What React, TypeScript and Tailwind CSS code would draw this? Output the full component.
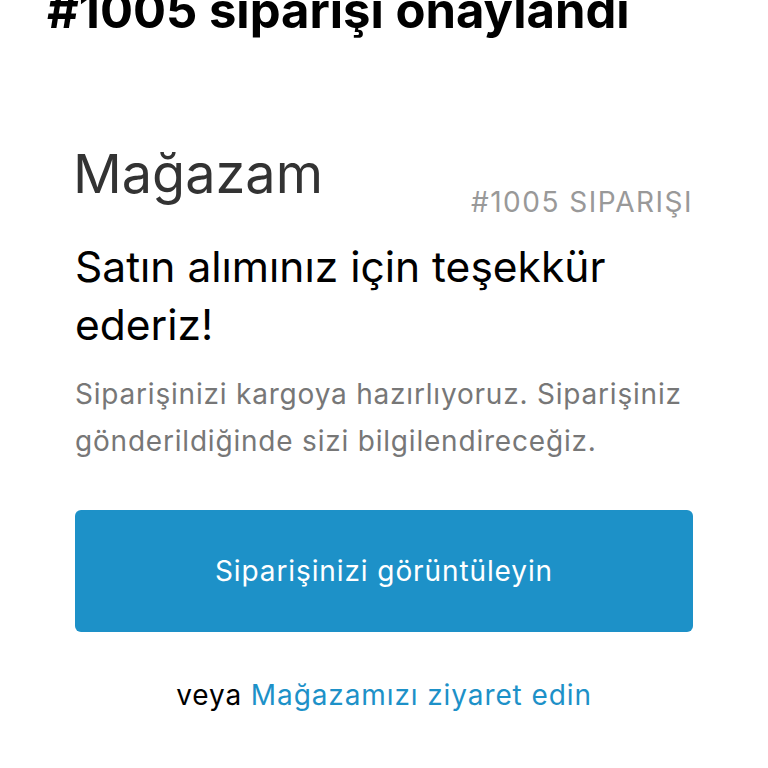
import React from "react";

export default function App() {
  return (
    <div className="w-[768px] h-[768px] overflow-hidden bg-white" style={{ fontFamily: "Inter, 'Noto Sans', sans-serif" }}>
      <h1 className="ml-[47px] -mt-[14px] text-[49px] leading-[49px] font-bold text-black whitespace-nowrap">
        #1005 siparişi onaylandı
      </h1>
      <div className="px-[75px] pt-[107px]">
        <div className="flex items-start justify-between">
          <div className="text-[54px] leading-[64px] text-[#333333] -ml-[2px]">Mağazam</div>
          <div className="mt-[44px] text-[28px] leading-[32px] tracking-[1.5px] text-[#999999] uppercase">#1005 SIPARIŞI</div>
        </div>
        <h2 className="mt-[20px] text-[42.5px] leading-[58px] text-black">
          Satın alımınız için teşekkür ederiz!
        </h2>
        <p className="mt-[17px] text-[28px] leading-[47px] tracking-[0.8px] text-[#777777]">
          Siparişinizi kargoya hazırlıyoruz. Siparişiniz gönderildiğinde sizi bilgilendireceğiz.
        </p>
        <button className="mt-[45px] w-full h-[122px] rounded-[6px] bg-[#1d91c8] text-white text-[28px] tracking-[0.9px]">
          Siparişinizi görüntüleyin
        </button>
        <div className="mt-[43px] text-center text-[28px] leading-[40px] tracking-[0.9px] text-black">
          veya <span className="text-[#1d91c8]">Mağazamızı ziyaret edin</span>
        </div>
      </div>
    </div>
  );
}
